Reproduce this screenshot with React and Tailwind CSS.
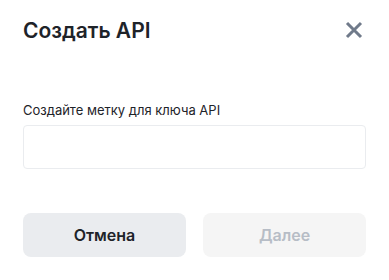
const App = () => {
    return (
        <div className="w-[389px] h-[280px] bg-white px-[23px] pt-[18px] font-['Inter',sans-serif] text-[#1e2329]">
            <div className="flex items-center justify-between h-[26px]">
                <h2 className="text-[21px] font-semibold leading-[26px]">Создать API</h2>
                <button className="text-[#707a8a] mr-[3px] mt-[-2px]">
                    <svg width="18" height="18" viewBox="0 0 18 18" fill="none">
                        <path d="M2 2L16 16M16 2L2 16" stroke="currentColor" strokeWidth="3" />
                    </svg>
                </button>
            </div>
            <div className="mt-[57px]">
                <label className="block text-[13px] leading-[18px] mb-[6px]">Создайте метку для ключа API</label>
                <input className="w-full h-[44px] border border-[#eaecef] rounded-[4px] px-3 outline-none" />
            </div>
            <div className="flex gap-[17px] mt-[44px]">
                <button className="flex-1 h-[44px] rounded-[8px] bg-[#eaecef] text-[16px] font-semibold text-[#1e2329]">Отмена</button>
                <button className="flex-1 h-[44px] rounded-[8px] bg-[#f5f5f5] text-[16px] font-semibold text-[#b7bdc6]">Далее</button>
            </div>
        </div>
    );
};

export default App;
